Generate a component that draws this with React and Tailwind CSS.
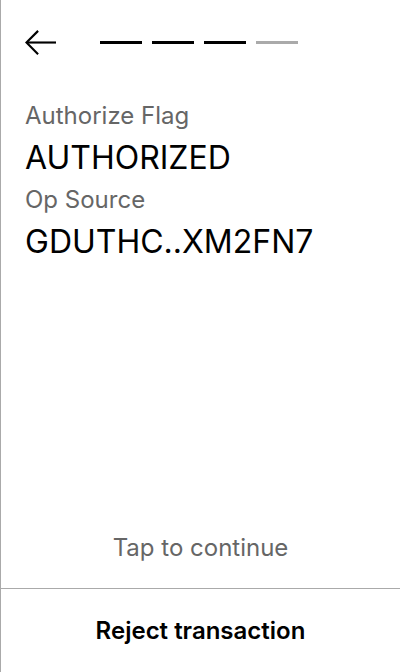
export default function App() {
    const steps = [true, true, true, false];

    return (
        <div className="h-[672px] w-[400px] bg-white border-l border-[#aaaaaa] flex flex-col" style={{ fontFamily: 'Inter, "Noto Sans", sans-serif' }}>
            <div className="flex items-center h-[86px] pl-6 pr-6">
                <button className="w-8 h-8 flex items-center justify-start">
                    <svg width="33" height="28" viewBox="0 0 33 28" fill="none" stroke="#000" strokeWidth="2.2">
                        <path d="M32 13.5H2" />
                        <path d="M13.5 1.5L1.5 13.5L13.5 25.5" />
                    </svg>
                </button>
                <div className="flex gap-[10px] ml-[43px] -mt-[1px]">
                    {steps.map((done, i) => (
                        <div key={i} className={`w-[42px] h-[3px] ${done ? 'bg-black' : 'bg-[#aaaaaa]'}`} />
                    ))}
                </div>
            </div>

            <div className="flex-1 px-6 pt-[10px]">
                <p className="text-[24px] leading-[40px] text-[#666666]">Authorize Flag</p>
                <p className="text-[32px] leading-[44px] text-black">AUTHORIZED</p>
                <p className="text-[24px] leading-[40px] text-[#666666]">Op Source</p>
                <p className="text-[32px] leading-[44px] text-black">GDUTHC..XM2FN7</p>
            </div>

            <div className="text-center text-[24px] leading-[30px] text-[#666666] pb-[25px]">Tap to continue</div>

            <div className="border-t border-[#aaaaaa] h-[84px] flex items-center justify-center">
                <span className="text-[24px] font-semibold text-black">Reject transaction</span>
            </div>
        </div>
    );
}
